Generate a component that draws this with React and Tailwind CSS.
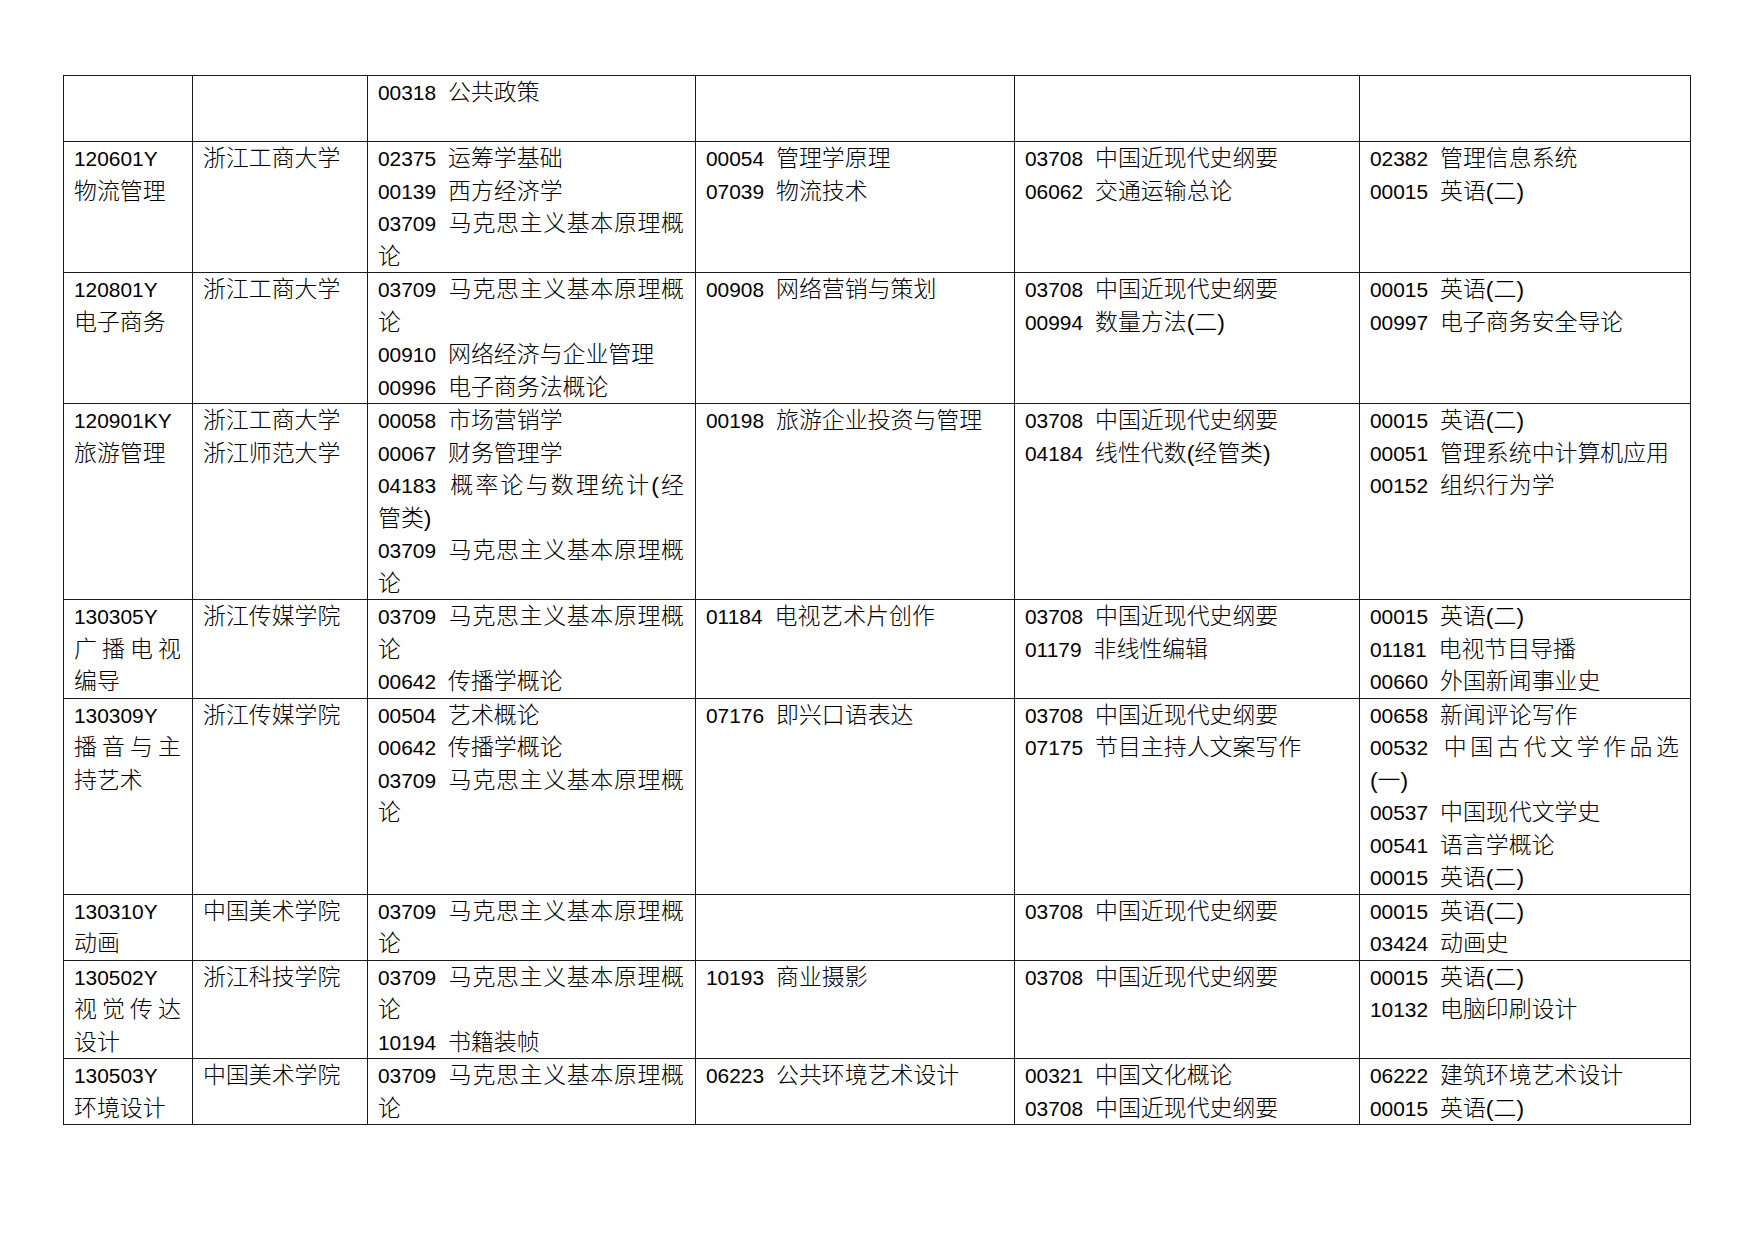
import React from "react";

const J = (t) => ({ t, j: true });

const rows = [
  {
    n: 2,
    c: [[], [], ["00318 公共政策"], [], [], []],
  },
  {
    n: 4,
    c: [
      ["120601Y", "物流管理"],
      ["浙江工商大学"],
      ["02375 运筹学基础", "00139 西方经济学", J("03709 马克思主义基本原理概"), "论"],
      ["00054 管理学原理", "07039 物流技术"],
      ["03708 中国近现代史纲要", "06062 交通运输总论"],
      ["02382 管理信息系统", "00015 英语(二)"],
    ],
  },
  {
    n: 4,
    c: [
      ["120801Y", "电子商务"],
      ["浙江工商大学"],
      [J("03709 马克思主义基本原理概"), "论", "00910 网络经济与企业管理", "00996 电子商务法概论"],
      ["00908 网络营销与策划"],
      ["03708 中国近现代史纲要", "00994 数量方法(二)"],
      ["00015 英语(二)", "00997 电子商务安全导论"],
    ],
  },
  {
    n: 6,
    c: [
      ["120901KY", "旅游管理"],
      ["浙江工商大学", "浙江师范大学"],
      [
        "00058 市场营销学",
        "00067 财务管理学",
        J("04183 概率论与数理统计(经"),
        "管类)",
        J("03709 马克思主义基本原理概"),
        "论",
      ],
      ["00198 旅游企业投资与管理"],
      ["03708 中国近现代史纲要", "04184 线性代数(经管类)"],
      ["00015 英语(二)", "00051 管理系统中计算机应用", "00152 组织行为学"],
    ],
  },
  {
    n: 3,
    c: [
      ["130305Y", J("广播电视"), "编导"],
      ["浙江传媒学院"],
      [J("03709 马克思主义基本原理概"), "论", "00642 传播学概论"],
      ["01184 电视艺术片创作"],
      ["03708 中国近现代史纲要", "01179 非线性编辑"],
      ["00015 英语(二)", "01181 电视节目导播", "00660 外国新闻事业史"],
    ],
  },
  {
    n: 6,
    c: [
      ["130309Y", J("播音与主"), "持艺术"],
      ["浙江传媒学院"],
      ["00504 艺术概论", "00642 传播学概论", J("03709 马克思主义基本原理概"), "论"],
      ["07176 即兴口语表达"],
      ["03708 中国近现代史纲要", "07175 节目主持人文案写作"],
      [
        "00658 新闻评论写作",
        J("00532 中国古代文学作品选"),
        "(一)",
        "00537 中国现代文学史",
        "00541 语言学概论",
        "00015 英语(二)",
      ],
    ],
  },
  {
    n: 2,
    c: [
      ["130310Y", "动画"],
      ["中国美术学院"],
      [J("03709 马克思主义基本原理概"), "论"],
      [],
      ["03708 中国近现代史纲要"],
      ["00015 英语(二)", "03424 动画史"],
    ],
  },
  {
    n: 3,
    c: [
      ["130502Y", J("视觉传达"), "设计"],
      ["浙江科技学院"],
      [J("03709 马克思主义基本原理概"), "论", "10194 书籍装帧"],
      ["10193 商业摄影"],
      ["03708 中国近现代史纲要"],
      ["00015 英语(二)", "10132 电脑印刷设计"],
    ],
  },
  {
    n: 2,
    c: [
      ["130503Y", "环境设计"],
      ["中国美术学院"],
      [J("03709 马克思主义基本原理概"), "论"],
      ["06223 公共环境艺术设计"],
      ["00321 中国文化概论", "03708 中国近现代史纲要"],
      ["06222 建筑环境艺术设计", "00015 英语(二)"],
    ],
  },
];

function Line({ item }) {
  const obj = typeof item === "string" ? { t: item, j: false } : item;
  const m = obj.t.match(/^([0-9A-Z]+)( (.*))?$/);
  const cls = obj.j
    ? "h-[32.5px] overflow-visible whitespace-nowrap text-justify [text-align-last:justify]"
    : "h-[32.5px] overflow-visible whitespace-nowrap";
  if (m) {
    return (
      <div className={cls}>
        <span className="text-[20.9px] leading-none">{m[1]}</span>
        {m[3] !== undefined && (
          <>
            <span className="inline-block w-[12px] h-[1px]"></span>
            {m[3]}
          </>
        )}
      </div>
    );
  }
  return <div className={cls}>{obj.t}</div>;
}

export default function App() {
  return (
    <div className="w-[1754px] h-[1241px] bg-white pt-[75px] pl-[63px] text-black">
      <table
        className="table-fixed border-collapse w-[1627px] text-[22.9px] leading-[32.5px]"
        style={{ fontFamily: '"Liberation Sans", "Noto Sans CJK SC", sans-serif' }}
      >
        <colgroup>
          <col className="w-[129px]" />
          <col className="w-[175px]" />
          <col className="w-[328px]" />
          <col className="w-[319px]" />
          <col className="w-[345px]" />
          <col className="w-[331px]" />
        </colgroup>
        <tbody>
          {rows.map((r, ri) => (
            <tr key={ri}>
              {r.c.map((cell, ci) => (
                <td
                  key={ci}
                  className="border border-[#1a1a1a] align-top pl-[10px] pr-[11px] py-0 font-light"
                >
                  {cell.map((it, k) => (
                    <Line key={k} item={it} />
                  ))}
                  {ri === 0 && cell.length < 2 &&
                    Array.from({ length: 2 - cell.length }).map((_, k) => (
                      <div key={"e" + k} className="h-[32.5px]"></div>
                    ))}
                </td>
              ))}
            </tr>
          ))}
        </tbody>
      </table>
    </div>
  );
}
